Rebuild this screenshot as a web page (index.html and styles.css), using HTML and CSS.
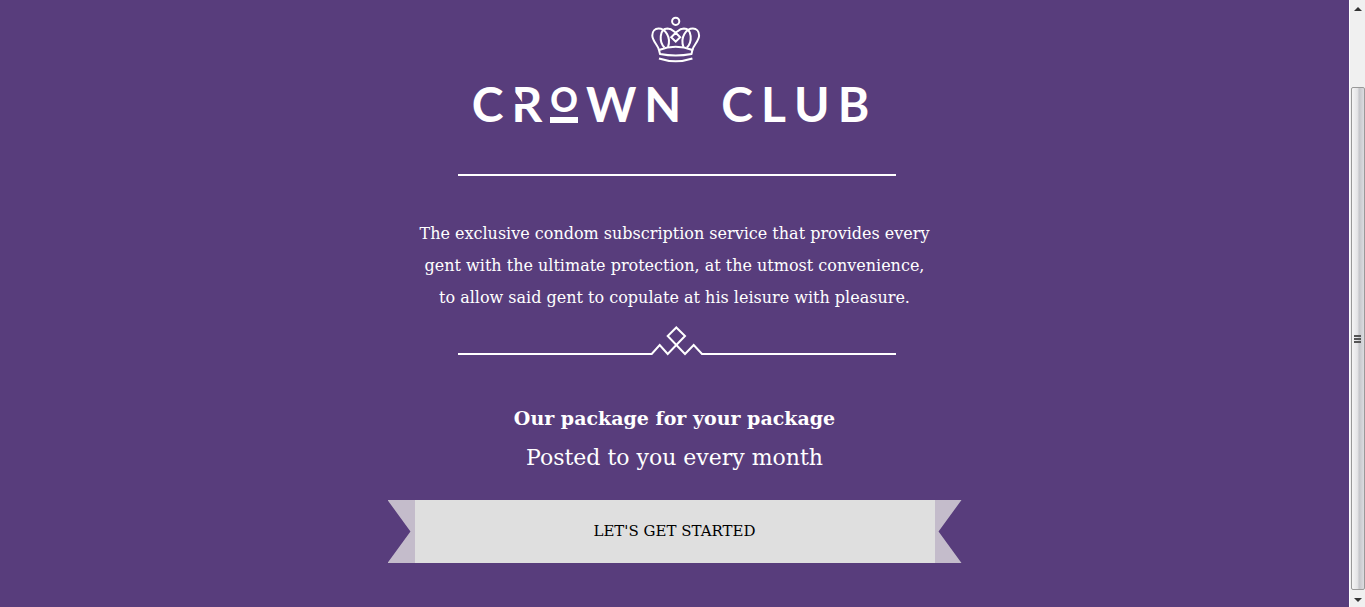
FILE: index.html
```html
<!DOCTYPE html>
<html lang="en">
<head>
<meta charset="utf-8">
<title>Crown Club</title>
<link rel="stylesheet" href="styles.css">
</head>
<body>
<main class="page">
  <header class="brand">
    <svg class="crown" viewBox="0 0 50 48" width="50" height="48" aria-hidden="true">
      <circle cx="24.700" cy="5.300" r="3.600"/>
      <path d="M8 34C7 29 1.300 25 1.300 19.500C1.300 15 4 12.500 7.500 12.500C14 12.500 20.500 21 17 31"/>
      <path d="M41.400 34C42.400 29 48.100 25 48.100 19.500C48.100 15 45.400 12.500 41.900 12.500C35.400 12.500 28.900 21 32.400 31"/>
      <path d="M13.500 31.500C8 26 8 12.800 16.500 12.500C20.500 12.500 22.500 15 24.700 16.700L29.200 21.200L24.700 25.700L20.200 21.200L24.700 16.700C26.900 15 28.900 12.500 32.900 12.500C41.400 12.800 41.400 26 35.900 31.500"/>
      <path d="M8 34Q24.700 27.500 41.400 34L40.500 38Q24.700 41 9 38Z"/>
      <path d="M8 42.500Q24.700 48 41.400 42.500"/>
    </svg>
    <h1 class="wordmark" aria-label="Crown Club">
      <span class="word"><span>C</span><span class="cut">R</span><span class="small-o">O</span><span>W</span><span>N</span></span>
      <span class="word"><span>C</span><span>L</span><span>U</span><span>B</span></span>
    </h1>
  </header>
  <hr class="rule">
  <p class="intro">The exclusive condom subscription service that provides every<br>gent with the ultimate protection, at the utmost convenience,<br>to allow said gent to copulate at his leisure with pleasure.</p>
  <svg class="peaks" viewBox="0 0 438 30" width="438" height="30" aria-hidden="true">
    <path d="M0 28H193.700L201.700 19L209.700 28L227 10L218.300 1.500L209.700 10L227 28L235.700 19L244 28H438"/>
  </svg>
  <h2 class="offer">Our package for your package</h2>
  <p class="posted">Posted to you every month</p>
  <button class="ribbon" type="button"><span class="ribbon-face">LET'S GET STARTED</span></button>
</main>
<div class="scrollbar" aria-hidden="true">
  <svg class="arrow" viewBox="0 0 8 4" width="8" height="4"><path d="M0 4L4 0L8 4Z"/></svg>
  <div class="thumb"><i></i><i></i><i></i></div>
  <svg class="arrow" viewBox="0 0 8 4" width="8" height="4"><path d="M0 0L4 4L8 0Z"/></svg>
</div>
</body>
</html>
```
FILE: styles.css
```css
* { box-sizing: border-box; }
body {
  margin: 0;
  min-height: 100vh;
  display: flex;
  background: #583d7c;
  color: #fff;
  font-family: "DejaVu Serif", serif;
}
.page {
  flex: 1;
  display: flex;
  flex-direction: column;
  align-items: center;
  padding: 16px 0 40px;
  text-align: center;
}
.brand { display: flex; flex-direction: column; align-items: center; }
.crown, .peaks { fill: none; stroke: #fff; stroke-width: 2; }
.crown, .peaks { margin-left: 4px; }
.wordmark {
  display: flex;
  gap: 40px;
  margin: 16px 8px 0 0;
  font: 700 48px/48px Lato, sans-serif;
}
.word { display: flex; gap: 8px; }
.cut { position: relative; }
.cut::after {
  content: "";
  position: absolute;
  left: 2px;
  top: 10px;
  width: 10px;
  height: 14px;
  background: #583d7c;
  clip-path: polygon(0 0, 100% 100%, 0 100%);
}
.small-o {
  align-self: flex-start;
  height: 43px;
  border-bottom: 6px solid #fff;
  font-size: 34px;
  font-weight: 900;
  line-height: 38px;
}
.rule {
  width: 438px;
  max-width: 100%;
  margin: 46px 0 0 4px;
  border: 0;
  border-top: 2px solid #fff;
}
.intro { margin: 42px 0 0; font-size: 16px; line-height: 32px; }
.peaks { margin-top: 12px; max-width: 100%; }
.offer { margin: 44px 0 0; font-size: 19px; line-height: 36px; }
.posted { margin: 2px 0 0; font-size: 22px; line-height: 40px; }
.ribbon {
  width: 574px;
  max-width: 100%;
  margin: 22px 0 0;
  padding: 0 27px;
  border: 0;
  background: #c4bccb;
  clip-path: polygon(0 0, 100% 0, 96% 50%, 100% 100%, 0 100%, 4% 50%);
  color: #000;
  font: 15px/63px "DejaVu Serif", serif;
}
.ribbon-face { display: block; background: #dfdfdf; }
.scrollbar {
  width: 16px;
  display: flex;
  flex-direction: column;
  align-items: center;
  padding: 7px 0 5px;
  border-left: 1px solid #fff;
  background: #f0f0f0;
}
.arrow { fill: #333; }
.thumb {
  flex: 1;
  width: 14px;
  margin: 76px 0 8px;
  display: flex;
  flex-direction: column;
  align-items: center;
  justify-content: center;
  gap: 1px;
  border: 1px solid #999;
  border-radius: 2px;
  background: linear-gradient(90deg, #f5f5f5, #e4e4e6 45%, #c5c6ca 60%, #dcdce0);
}
.thumb i { width: 7px; height: 2px; background: #555; }
```
